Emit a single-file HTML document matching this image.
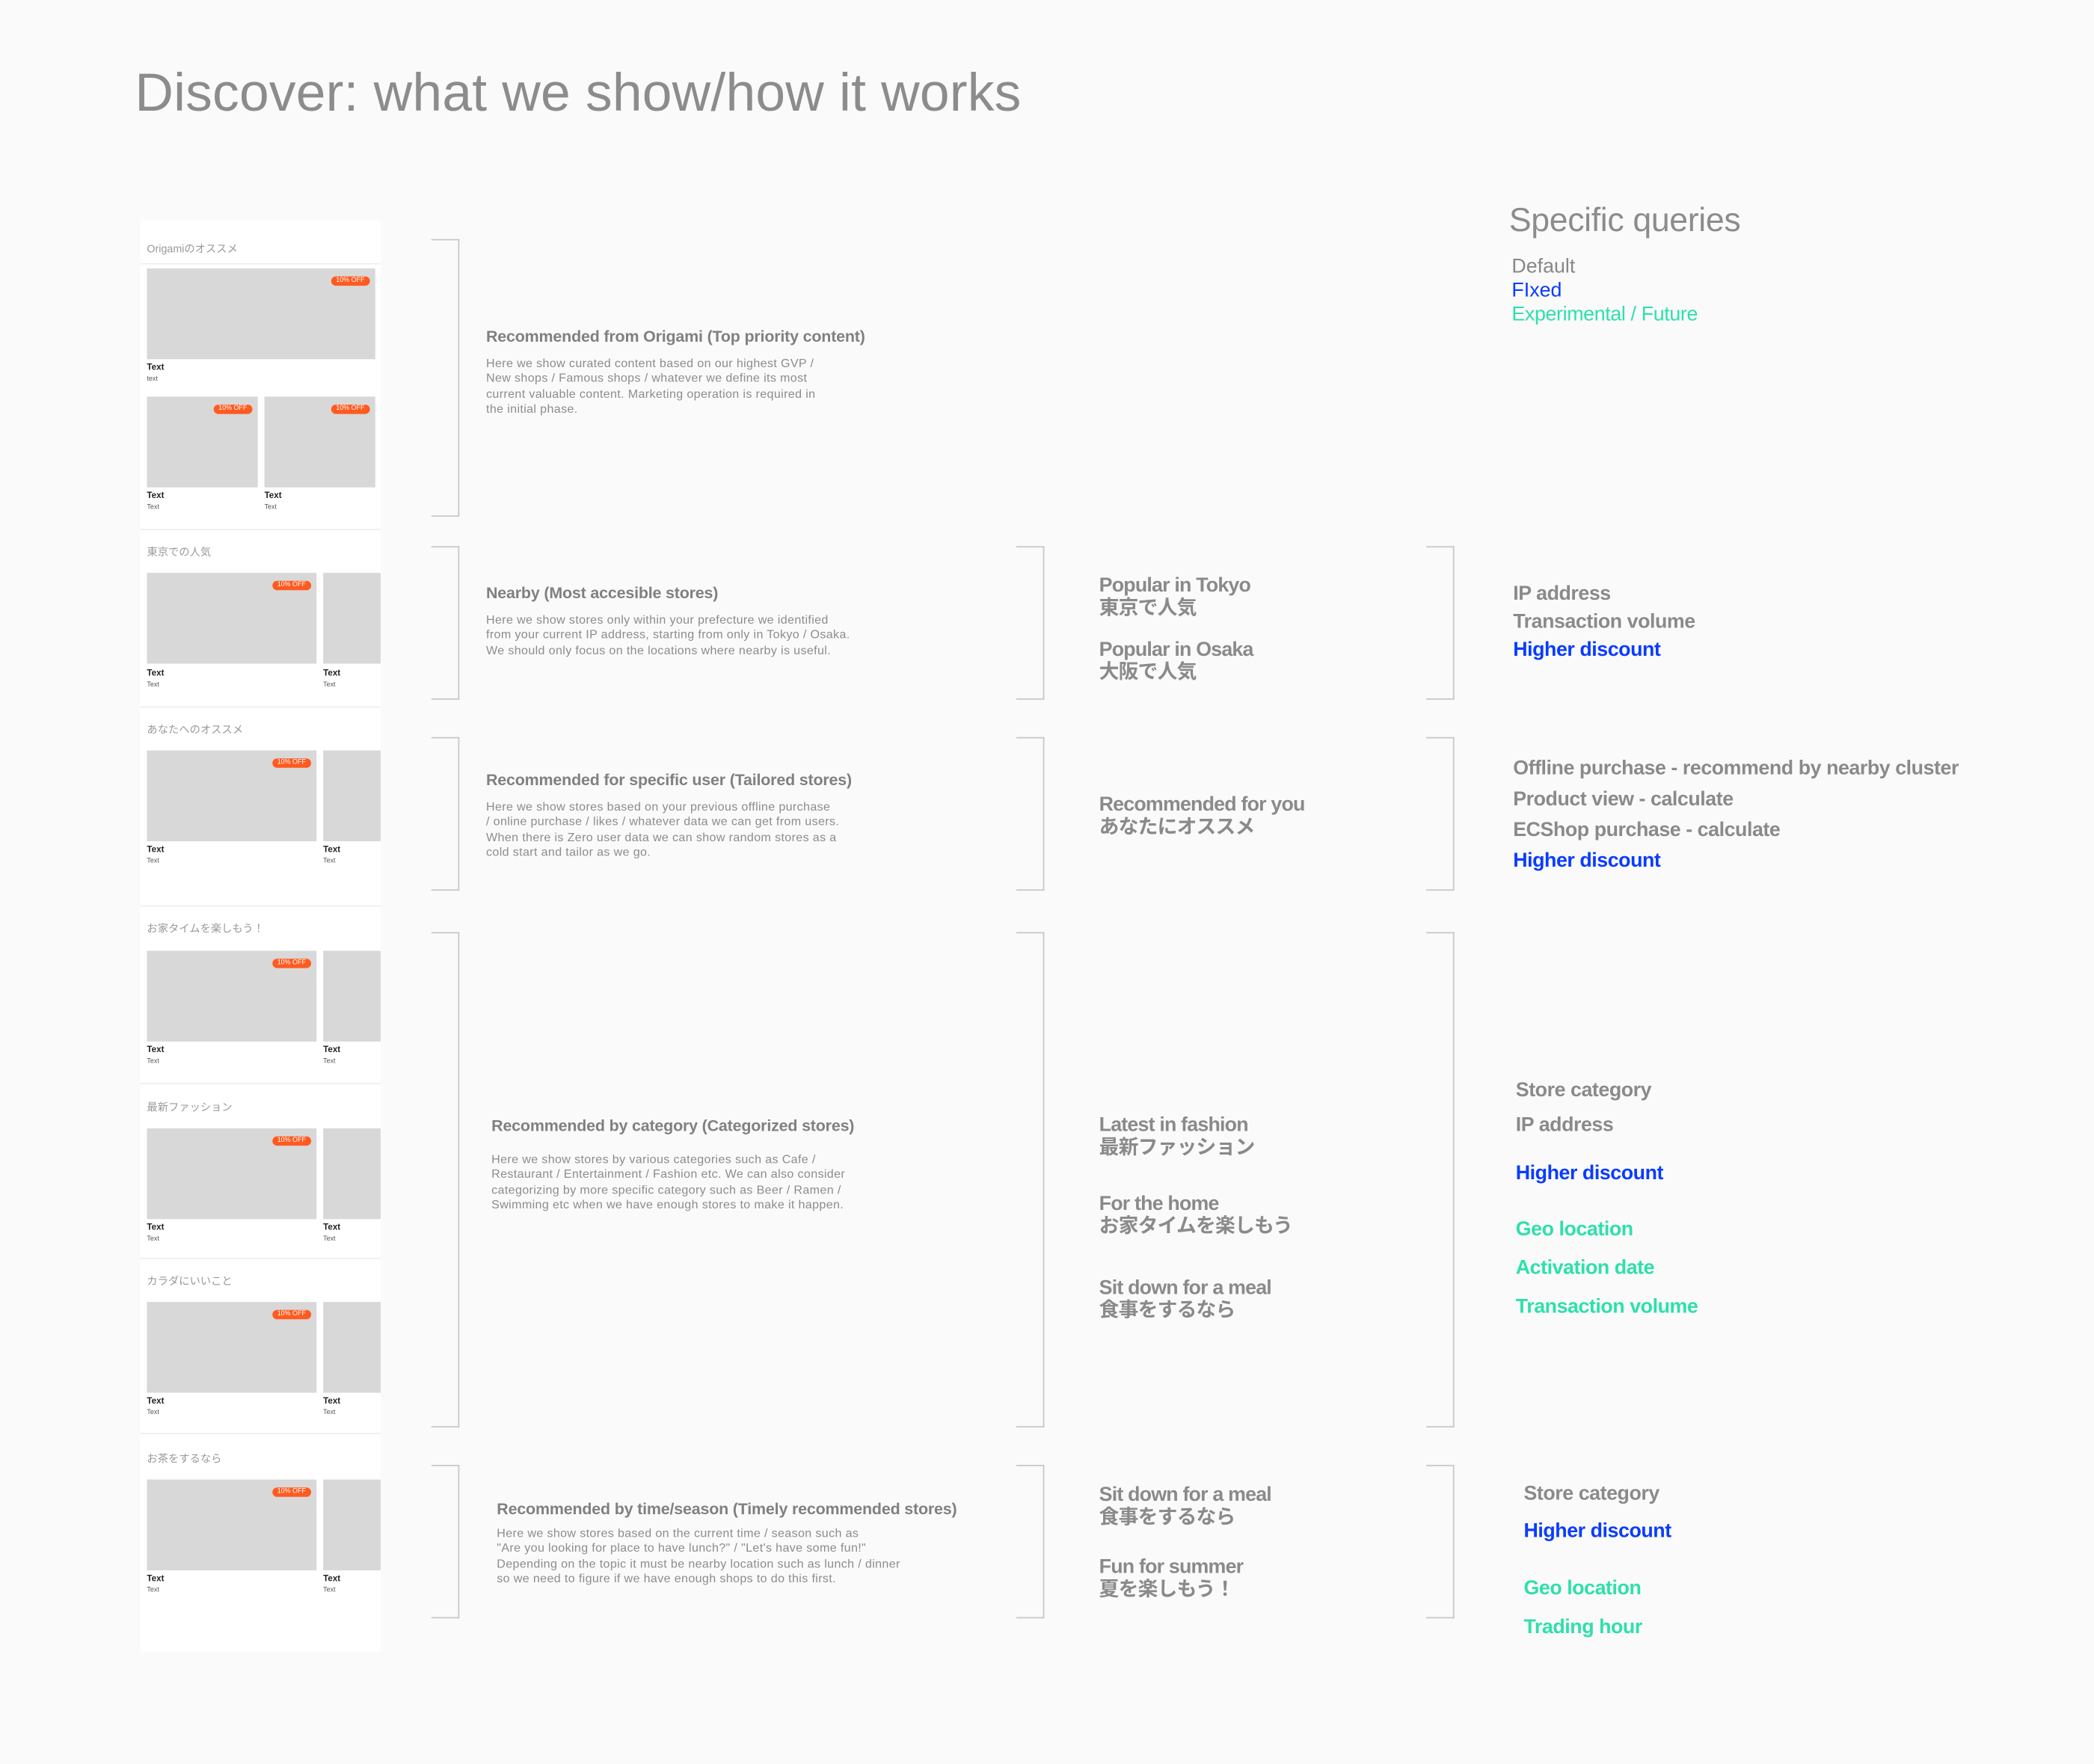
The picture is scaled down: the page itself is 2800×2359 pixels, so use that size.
<!DOCTYPE html>
<html><head><meta charset="utf-8">
<style>
html,body{margin:0;padding:0;background:#fafafa;}
body{width:2800px;height:2358px;overflow:hidden;position:relative;}
#w{position:absolute;left:0;top:0;width:1568px;height:1321px;transform:scale(1.785714);transform-origin:0 0;font-family:"Liberation Sans","Noto Sans CJK JP",sans-serif;}
.a{position:absolute;white-space:nowrap;}
.card{position:absolute;left:105px;top:165px;width:180px;height:1072px;background:#fff;overflow:hidden;}
.sep{position:absolute;left:0;width:180px;height:1px;background:#efefef;}
.img{position:absolute;background:#d8d8d8;}
.bd{position:absolute;background:#ff5a1f;color:#fff;font-size:5px;line-height:7px;height:7px;padding:0 4px;border-radius:4px;top:6px;right:4px;}
.st{position:absolute;font-size:8px;color:#999;line-height:10px;}
.t1{position:absolute;font-size:6.5px;font-weight:bold;color:#222;line-height:8px;}
.t2{position:absolute;font-size:5px;color:#555;line-height:6px;}
.br{position:absolute;border:1px solid #c8c8c8;border-left:none;width:20px;}
.h{font-size:12px;font-weight:bold;color:#808080;letter-spacing:-0.1px;line-height:14px;}
.p{font-size:9px;color:#8c8c8c;line-height:11.3px;letter-spacing:0.2px;}
.c2{font-size:15px;font-weight:bold;color:#8a8a8a;letter-spacing:-0.45px;line-height:17px;}
.c3{font-size:15px;font-weight:bold;color:#8a8a8a;letter-spacing:-0.25px;line-height:18px;}
.bl{color:#0a3cff;}
.gr{color:#2ee0ab;}
</style></head><body><div id="w">

<div class="a" style="left:101px;top:46px;font-size:40px;color:#8c8c8c;line-height:48px;letter-spacing:0.1px;">Discover: what we show/how it works</div>

<div class="a" style="left:1130px;top:150px;font-size:25px;color:#8c8c8c;line-height:30px;letter-spacing:-0.2px;">Specific queries</div>
<div class="a" style="left:1132px;top:191px;font-size:15px;color:#888;line-height:18px;">Default</div>
<div class="a bl" style="left:1132px;top:209px;font-size:15px;line-height:18px;">FIxed</div>
<div class="a gr" style="left:1132px;top:227px;font-size:15px;line-height:18px;letter-spacing:-0.2px;">Experimental / Future</div>

<div class="card">
 <div class="st" style="left:5px;top:17px;">Origamiのオススメ</div>
 <div class="sep" style="top:32px;"></div>
 <div class="img" style="left:5px;top:36px;width:171px;height:68px;"><div class="bd">10% OFF</div></div>
 <div class="t1" style="left:5px;top:107px;">Text</div><div class="t2" style="left:5px;top:116px;">text</div>
 <div class="img" style="left:5px;top:132px;width:83px;height:68px;"><div class="bd">10% OFF</div></div>
 <div class="img" style="left:93px;top:132px;width:83px;height:68px;"><div class="bd">10% OFF</div></div>
 <div class="t1" style="left:5px;top:203px;">Text</div><div class="t2" style="left:5px;top:212px;">Text</div>
 <div class="t1" style="left:93px;top:203px;">Text</div><div class="t2" style="left:93px;top:212px;">Text</div>
 <div class="sep" style="top:231px;"></div>
 <div class="st" style="left:5px;top:244px;">東京での人気</div>
 <div class="img" style="left:5px;top:264px;width:127px;height:68px;"><div class="bd">10% OFF</div></div>
 <div class="img" style="left:137px;top:264px;width:50px;height:68px;"></div>
 <div class="t1" style="left:5px;top:336px;">Text</div><div class="t2" style="left:5px;top:345px;">Text</div>
 <div class="t1" style="left:137px;top:336px;">Text</div><div class="t2" style="left:137px;top:345px;">Text</div>
 <div class="sep" style="top:364px;"></div>
 <div class="st" style="left:5px;top:377px;">あなたへのオススメ</div>
 <div class="img" style="left:5px;top:397px;width:127px;height:68px;"><div class="bd">10% OFF</div></div>
 <div class="img" style="left:137px;top:397px;width:50px;height:68px;"></div>
 <div class="t1" style="left:5px;top:468px;">Text</div><div class="t2" style="left:5px;top:477px;">Text</div>
 <div class="t1" style="left:137px;top:468px;">Text</div><div class="t2" style="left:137px;top:477px;">Text</div>
 <div class="sep" style="top:513px;"></div>
 <div class="st" style="left:5px;top:526px;">お家タイムを楽しもう！</div>
 <div class="img" style="left:5px;top:547px;width:127px;height:68px;"><div class="bd">10% OFF</div></div>
 <div class="img" style="left:137px;top:547px;width:50px;height:68px;"></div>
 <div class="t1" style="left:5px;top:618px;">Text</div><div class="t2" style="left:5px;top:627px;">Text</div>
 <div class="t1" style="left:137px;top:618px;">Text</div><div class="t2" style="left:137px;top:627px;">Text</div>
 <div class="sep" style="top:646px;"></div>
 <div class="st" style="left:5px;top:660px;">最新ファッション</div>
 <div class="img" style="left:5px;top:680px;width:127px;height:68px;"><div class="bd">10% OFF</div></div>
 <div class="img" style="left:137px;top:680px;width:50px;height:68px;"></div>
 <div class="t1" style="left:5px;top:751px;">Text</div><div class="t2" style="left:5px;top:760px;">Text</div>
 <div class="t1" style="left:137px;top:751px;">Text</div><div class="t2" style="left:137px;top:760px;">Text</div>
 <div class="sep" style="top:777px;"></div>
 <div class="st" style="left:5px;top:790px;">カラダにいいこと</div>
 <div class="img" style="left:5px;top:810px;width:127px;height:68px;"><div class="bd">10% OFF</div></div>
 <div class="img" style="left:137px;top:810px;width:50px;height:68px;"></div>
 <div class="t1" style="left:5px;top:881px;">Text</div><div class="t2" style="left:5px;top:890px;">Text</div>
 <div class="t1" style="left:137px;top:881px;">Text</div><div class="t2" style="left:137px;top:890px;">Text</div>
 <div class="sep" style="top:908px;"></div>
 <div class="st" style="left:5px;top:923px;">お茶をするなら</div>
 <div class="img" style="left:5px;top:943px;width:127px;height:68px;"><div class="bd">10% OFF</div></div>
 <div class="img" style="left:137px;top:943px;width:50px;height:68px;"></div>
 <div class="t1" style="left:5px;top:1014px;">Text</div><div class="t2" style="left:5px;top:1023px;">Text</div>
 <div class="t1" style="left:137px;top:1014px;">Text</div><div class="t2" style="left:137px;top:1023px;">Text</div>
</div>

<div class="br" style="left:323px;top:179px;height:206px;"></div>
<div class="br" style="left:323px;top:409px;height:113px;"></div>
<div class="br" style="left:323px;top:552px;height:113px;"></div>
<div class="br" style="left:323px;top:698px;height:369px;"></div>
<div class="br" style="left:323px;top:1097px;height:113px;"></div>
<div class="br" style="left:761px;top:409px;height:113px;"></div>
<div class="br" style="left:761px;top:552px;height:113px;"></div>
<div class="br" style="left:761px;top:698px;height:369px;"></div>
<div class="br" style="left:761px;top:1097px;height:113px;"></div>
<div class="br" style="left:1068px;top:409px;height:113px;"></div>
<div class="br" style="left:1068px;top:552px;height:113px;"></div>
<div class="br" style="left:1068px;top:698px;height:369px;"></div>
<div class="br" style="left:1068px;top:1097px;height:113px;"></div>

<div class="a h" style="left:364px;top:245px;">Recommended from Origami (Top priority content)</div>
<div class="a p" style="left:364px;top:267px;">Here we show curated content based on our highest GVP /<br>New shops / Famous shops / whatever we define its most<br>current valuable content. Marketing operation is required in<br>the initial phase.</div>

<div class="a h" style="left:364px;top:437px;">Nearby (Most accesible stores)</div>
<div class="a p" style="left:364px;top:459px;">Here we show stores only within your prefecture we identified<br>from your current IP address, starting from only in Tokyo / Osaka.<br>We should only focus on the locations where nearby is useful.</div>

<div class="a h" style="left:364px;top:577px;">Recommended for specific user (Tailored stores)</div>
<div class="a p" style="left:364px;top:599px;">Here we show stores based on your previous offline purchase<br>/ online purchase / likes / whatever data we can get from users.<br>When there is Zero user data we can show random stores as a<br>cold start and tailor as we go.</div>

<div class="a h" style="left:368px;top:836px;">Recommended by category (Categorized stores)</div>
<div class="a p" style="left:368px;top:863px;">Here we show stores by various categories such as Cafe /<br>Restaurant / Entertainment / Fashion etc. We can also consider<br>categorizing by more specific category such as Beer / Ramen /<br>Swimming etc when we have enough stores to make it happen.</div>

<div class="a h" style="left:372px;top:1123px;">Recommended by time/season (Timely recommended stores)</div>
<div class="a p" style="left:372px;top:1143px;">Here we show stores based on the current time / season such as<br>"Are you looking for place to have lunch?" / "Let's have some fun!"<br>Depending on the topic it must be nearby location such as lunch / dinner<br>so we need to figure if we have enough shops to do this first.</div>

<div class="a c2" style="left:823px;top:430px;">Popular in Tokyo<br>東京で人気</div>
<div class="a c2" style="left:823px;top:478px;">Popular in Osaka<br>大阪で人気</div>
<div class="a c2" style="left:823px;top:594px;">Recommended for you<br>あなたにオススメ</div>
<div class="a c2" style="left:823px;top:834px;">Latest in fashion<br>最新ファッション</div>
<div class="a c2" style="left:823px;top:893px;">For the home<br>お家タイムを楽しもう</div>
<div class="a c2" style="left:823px;top:956px;">Sit down for a meal<br>食事をするなら</div>
<div class="a c2" style="left:823px;top:1111px;">Sit down for a meal<br>食事をするなら</div>
<div class="a c2" style="left:823px;top:1165px;">Fun for summer<br>夏を楽しもう！</div>

<div class="a c3" style="left:1133px;top:436px;">IP address</div>
<div class="a c3" style="left:1133px;top:457px;">Transaction volume</div>
<div class="a c3 bl" style="left:1133px;top:478px;">Higher discount</div>

<div class="a c3" style="left:1133px;top:567px;">Offline purchase - recommend by nearby cluster</div>
<div class="a c3" style="left:1133px;top:590px;">Product view - calculate</div>
<div class="a c3" style="left:1133px;top:613px;">ECShop purchase - calculate</div>
<div class="a c3 bl" style="left:1133px;top:636px;">Higher discount</div>

<div class="a c3" style="left:1135px;top:808px;">Store category</div>
<div class="a c3" style="left:1135px;top:834px;">IP address</div>
<div class="a c3 bl" style="left:1135px;top:870px;">Higher discount</div>
<div class="a c3 gr" style="left:1135px;top:912px;">Geo location</div>
<div class="a c3 gr" style="left:1135px;top:941px;">Activation date</div>
<div class="a c3 gr" style="left:1135px;top:970px;">Transaction volume</div>

<div class="a c3" style="left:1141px;top:1110px;">Store category</div>
<div class="a c3 bl" style="left:1141px;top:1138px;">Higher discount</div>
<div class="a c3 gr" style="left:1141px;top:1181px;">Geo location</div>
<div class="a c3 gr" style="left:1141px;top:1210px;">Trading hour</div>

</div></body></html>
